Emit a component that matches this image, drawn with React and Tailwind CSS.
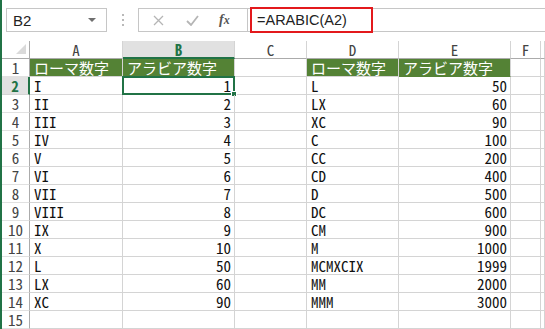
import React from "react";

const mono = "font-['Noto_Sans_Mono_CJK_JP','Liberation_Mono',monospace]";
const jp = "font-['Noto_Sans_Mono_CJK_JP','Noto_Sans_CJK_JP',sans-serif]";

const left = [
  ["I", 1], ["II", 2], ["III", 3], ["IV", 4], ["V", 5], ["VI", 6], ["VII", 7],
  ["VIII", 8], ["IX", 9], ["X", 10], ["L", 50], ["LX", 60], ["XC", 90],
];
const right = [
  ["L", 50], ["LX", 60], ["XC", 90], ["C", 100], ["CC", 200], ["CD", 400],
  ["D", 500], ["DC", 600], ["CM", 900], ["M", 1000], ["MCMXCIX", 1999],
  ["MM", 2000], ["MMM", 3000],
];
const cols = ["A", "B", "C", "D", "E", "F", ""];

const Cell = ({ children, className = "" }) => (
  <div className={`h-[18px] leading-[17px] border-r border-b border-[#d4d4d4] flex items-center overflow-hidden whitespace-nowrap text-[15px] text-[#111] ${mono} ${className}`}>
    {children}
  </div>
);

const RowHead = ({ n, active }) => (
  <div
    className={`h-[18px] leading-[17px] flex items-center justify-center border-b text-[15px] ${mono} ${
      active
        ? "bg-[#e1e1e1] border-b-[#d4d4d4] border-r-2 border-r-[#217346] text-[#217346] font-bold"
        : "border-b-[#e1e1e1] border-r border-r-[#ababab] text-[#444]"
    }`}
  >
    {n}
  </div>
);

export default function App() {
  const rows = [];
  for (let r = 2; r <= 15; r++) {
    const a = left[r - 2];
    const d = right[r - 2];
    rows.push(
      <React.Fragment key={r}>
        <RowHead n={r} active={r === 2} />
        <Cell className="pl-[4px]">{a ? a[0] : ""}</Cell>
        <Cell className="justify-end pr-[3px] relative overflow-visible">
          {a ? a[1] : ""}
          {r === 2 && (
            <>
              <div className="absolute -inset-[1px] border-2 border-[#217346]" />
              <div className="absolute -right-[3px] -bottom-[3px] w-[6px] h-[6px] bg-[#217346] border border-white" />
            </>
          )}
        </Cell>
        <Cell />
        <Cell className="pl-[4px]">{d ? d[0] : ""}</Cell>
        <Cell className="justify-end pr-[3px]">{d ? d[1] : ""}</Cell>
        <Cell />
        <Cell />
      </React.Fragment>
    );
  }

  return (
    <div className="w-[545px] h-[329px] overflow-hidden bg-white border-l-2 border-[#217346] font-['Liberation_Sans',sans-serif]">
      {/* formula bar */}
      <div className="h-[41px] flex items-start pt-[8px] pl-[4px]">
        <div className="w-[101px] h-[24px] border border-[#c6c6c6] flex items-center justify-between pl-[6px] pr-[10px]">
          <span className="text-[15px] leading-none text-[#222]">B2</span>
          <svg width="8" height="5" viewBox="0 0 8 5">
            <path d="M0 0 L8 0 L4 4 Z" fill="#6f6f6f" />
          </svg>
        </div>
        <div className="ml-[15px] mt-[6px] flex flex-col gap-[3px]">
          <div className="w-[2px] h-[2px] bg-[#b9b9b9]" />
          <div className="w-[2px] h-[2px] bg-[#b9b9b9]" />
          <div className="w-[2px] h-[2px] bg-[#b9b9b9]" />
        </div>
        <div className="ml-[14px] flex-1 h-[24px] border-y border-l border-[#c6c6c6] flex relative">
          <div className="w-[109px] border-r border-[#c6c6c6] flex items-center">
            <svg className="ml-[14px]" width="11" height="11" viewBox="0 0 11 11">
              <path d="M1 1 L10 10 M10 1 L1 10" stroke="#b5b5b5" strokeWidth="1.3" />
            </svg>
            <svg className="ml-[22px]" width="13" height="11" viewBox="0 0 13 11">
              <path d="M1 6 L5 10 L12 1" stroke="#b5b5b5" strokeWidth="1.8" fill="none" />
            </svg>
            <span className="ml-[20px] text-[14px] leading-none italic font-bold text-[#555] font-['Liberation_Serif',serif]">
              f<span className="text-[12px]">x</span>
            </span>
          </div>
          <div className="flex items-center pl-[9px] text-[14.5px] leading-none text-[#222]">=ARABIC(A2)</div>
          <div className="absolute left-[111px] -top-[2px] w-[123px] h-[26px] border-2 border-[#e3191c]" />
        </div>
      </div>

      {/* sheet */}
      <div className="grid grid-cols-[28px_93px_112px_72px_92px_112px_30px_1fr]">
        <div className="h-[18px] border-r border-r-[#ababab] border-b border-b-[#ababab] flex items-end justify-end pr-[3px] pb-[4px]">
          <svg width="10" height="10" viewBox="0 0 10 10">
            <path d="M10 0 L10 10 L0 10 Z" fill="#dadada" />
          </svg>
        </div>
        {cols.map((c) => (
          <div
            key={c || "g"}
            className={`h-[18px] leading-[17px] flex items-center justify-center border-r border-r-[#d4d4d4] text-[15px] ${mono} ${
              c === "B"
                ? "bg-[#e1e1e1] border-b-2 border-b-[#217346] text-[#217346] font-bold"
                : "border-b border-b-[#ababab] text-[#444]"
            }`}
          >
            {c}
          </div>
        ))}

        <RowHead n={1} />
        <Cell className={`pl-[4px] bg-[#548235] border-[#548235] text-white ${jp}`}>ローマ数字</Cell>
        <Cell className={`pl-[4px] bg-[#548235] border-b-[#548235] text-white ${jp}`}>アラビア数字</Cell>
        <Cell />
        <Cell className={`pl-[4px] bg-[#548235] border-[#548235] text-white ${jp}`}>ローマ数字</Cell>
        <Cell className={`pl-[4px] bg-[#548235] border-b-[#548235] text-white ${jp}`}>アラビア数字</Cell>
        <Cell />
        <Cell />
        {rows}
      </div>
    </div>
  );
}
